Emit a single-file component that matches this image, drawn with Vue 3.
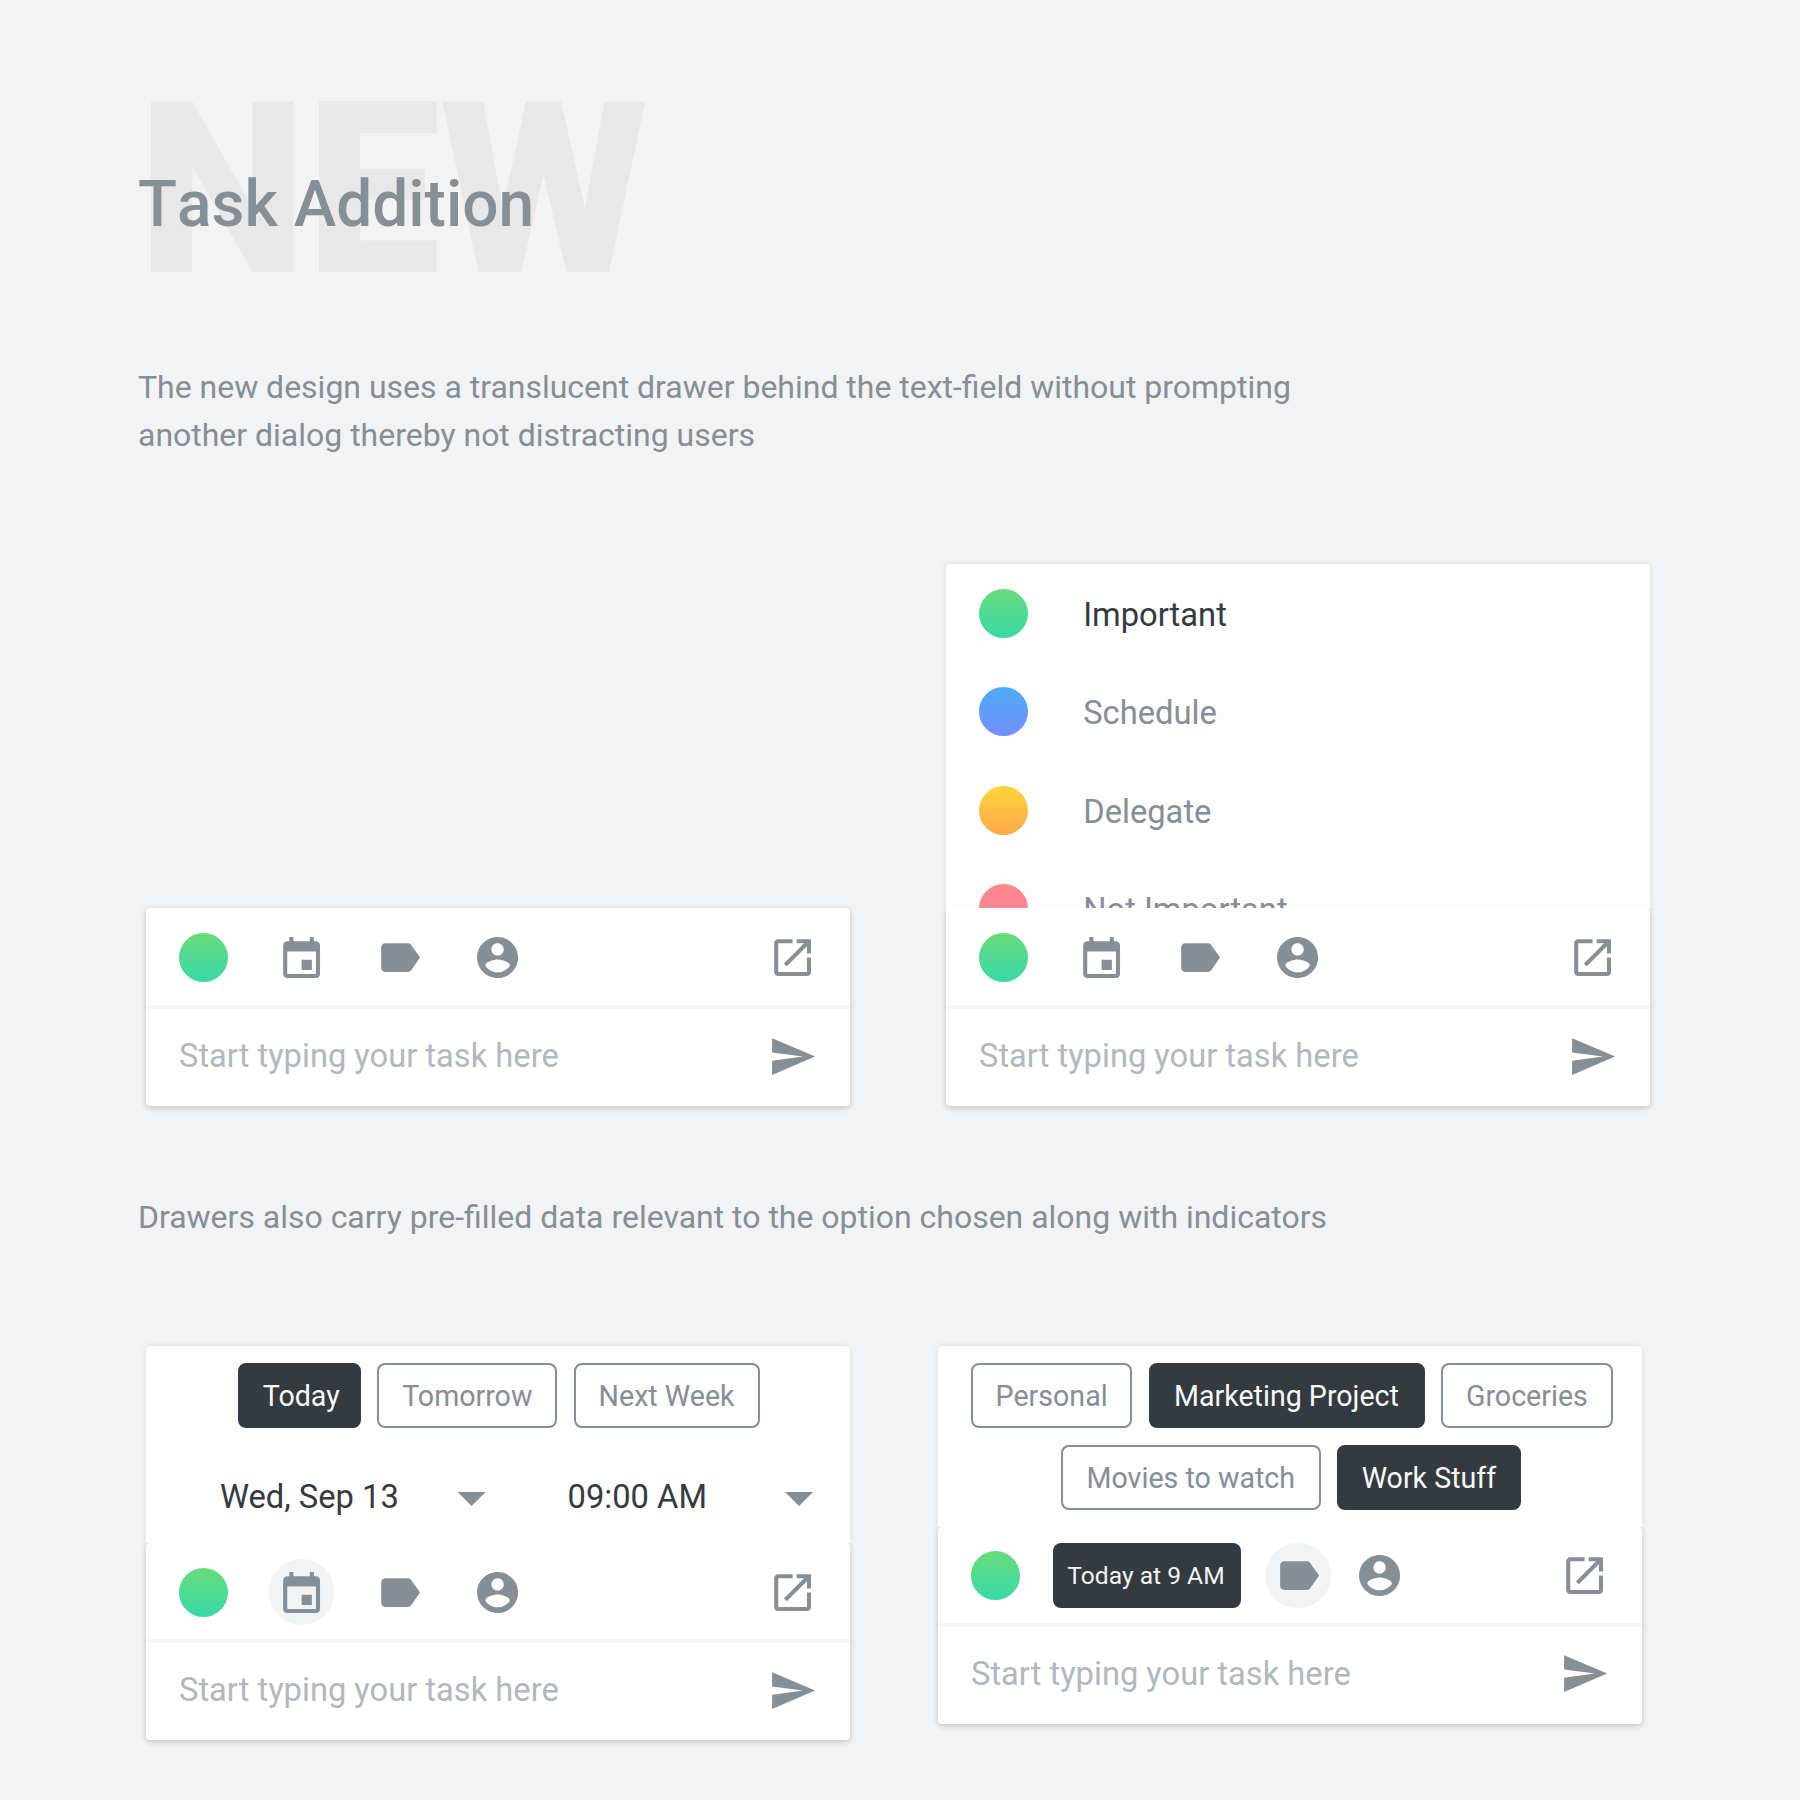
<script setup>
import { h } from 'vue'

const PATHS = {
  event:
    'M17 12h-5v5h5v-5zM16 1v2H8V1H6v2H5c-1.11 0-1.99.9-1.99 2L3 19c0 1.1.89 2 2 2h14c1.1 0 2-.9 2-2V5c0-1.1-.9-2-2-2h-1V1h-2zm3 18H5V8h14v11z',
  label:
    'M17.63 5.84C17.27 5.33 16.67 5 16 5L5 5.01C3.9 5.01 3 5.9 3 7v10c0 1.1.9 1.99 2 1.99L16 19c.67 0 1.27-.33 1.63-.84L22 12l-4.37-6.16z',
  account:
    'M12 2C6.48 2 2 6.48 2 12s4.48 10 10 10 10-4.48 10-10S17.52 2 12 2zm0 3c1.66 0 3 1.34 3 3s-1.34 3-3 3-3-1.34-3-3 1.34-3 3-3zm0 14.2c-2.5 0-4.71-1.28-6-3.22.03-1.99 4-3.08 6-3.08 1.99 0 5.97 1.09 6 3.08-1.29 1.94-3.5 3.22-6 3.22z',
  open:
    'M19 19H5V5h7V3H5c-1.11 0-2 .9-2 2v14c0 1.1.89 2 2 2h14c1.1 0 2-.9 2-2v-7h-2v7zM14 3v2h3.59l-9.83 9.83 1.41 1.41L19 6.41V10h2V3h-7z',
  send: 'M2.01 21L23 12 2.01 3 2 10l15 2-15 2z',
}

const Icon = (props) =>
  h(
    'svg',
    {
      viewBox: props.name === 'event' ? '0 -1 24 24' : '0 0 24 24',
      width: 49.2,
      height: 49.2,
      fill: 'currentColor',
      style: 'display:block',
    },
    [h('path', { d: PATHS[props.name] })],
  )
Icon.props = ['name']

const priorities = [
  { name: 'Important', tone: 'green', active: true },
  { name: 'Schedule', tone: 'blue' },
  { name: 'Delegate', tone: 'yellow' },
  { name: 'Not Important', tone: 'pink' },
]
const dates = [
  { name: 'Today', on: true, w: 122.6 },
  { name: 'Tomorrow', w: 179.8 },
  { name: 'Next Week', w: 186 },
]
const tags = [
  [
    { name: 'Personal', w: 161 },
    { name: 'Marketing Project', on: true, w: 276 },
    { name: 'Groceries', w: 172 },
  ],
  [
    { name: 'Movies to watch', w: 259.4 },
    { name: 'Work Stuff', on: true, w: 184 },
  ],
]
</script>

<template>
  <main class="page">
    <header class="head">
      <div class="ghost">NEW</div>
      <h1>Task Addition</h1>
    </header>

    <p class="intro">
      The new design uses a translucent drawer behind the text-field without prompting<br />another dialog thereby not
      distracting users
    </p>

    <section class="row first">
      <article class="card">
        <div class="bar">
          <div class="tools">
            <span class="dot green"></span>
            <span class="tool"><Icon name="event" /></span>
            <span class="tool"><Icon name="label" /></span>
            <span class="tool"><Icon name="account" /></span>
            <span class="end"><Icon name="open" /></span>
          </div>
          <div class="entry"><span>Start typing your task here</span><Icon name="send" /></div>
        </div>
      </article>

      <article class="card">
        <div class="drawer list">
          <div v-for="p in priorities" :key="p.name" class="item" :class="{ active: p.active }">
            <span class="dot" :class="p.tone"></span><span class="item-name">{{ p.name }}</span>
          </div>
        </div>
        <div class="bar">
          <div class="tools">
            <span class="dot green"></span>
            <span class="tool"><Icon name="event" /></span>
            <span class="tool"><Icon name="label" /></span>
            <span class="tool"><Icon name="account" /></span>
            <span class="end"><Icon name="open" /></span>
          </div>
          <div class="entry"><span>Start typing your task here</span><Icon name="send" /></div>
        </div>
      </article>
    </section>

    <p class="note">Drawers also carry pre-filled data relevant to the option chosen along with indicators</p>

    <section class="row second">
      <article class="card">
        <div class="drawer when">
          <div class="chips">
            <span v-for="d in dates" :key="d.name" class="chip" :class="{ on: d.on }" :style="{ width: d.w + 'px' }">{{
              d.name
            }}</span>
          </div>
          <div class="pickers">
            <span class="date">Wed, Sep 13</span><i class="caret"></i> <span class="time">09:00 AM</span
            ><i class="caret"></i>
          </div>
        </div>
        <div class="bar short">
          <div class="tools">
            <span class="dot green"></span>
            <span class="tool lit"><Icon name="event" /></span>
            <span class="tool"><Icon name="label" /></span>
            <span class="tool"><Icon name="account" /></span>
            <span class="end"><Icon name="open" /></span>
          </div>
          <div class="entry"><span>Start typing your task here</span><Icon name="send" /></div>
        </div>
      </article>

      <article class="card">
        <div class="drawer tags">
          <div v-for="(line, i) in tags" :key="i" class="chips">
            <span v-for="t in line" :key="t.name" class="chip" :class="{ on: t.on }" :style="{ width: t.w + 'px' }">{{
              t.name
            }}</span>
          </div>
        </div>
        <div class="bar short">
          <div class="tools packed">
            <span class="dot green"></span>
            <span class="stamp">Today at 9 AM</span>
            <span class="tool lit"><Icon name="label" /></span>
            <span class="tool"><Icon name="account" /></span>
            <span class="end"><Icon name="open" /></span>
          </div>
          <div class="entry"><span>Start typing your task here</span><Icon name="send" /></div>
        </div>
      </article>
    </section>
  </main>
</template>

<style>
body {
  background: #f1f3f5;
}
</style>

<style scoped>
.page {
  box-sizing: border-box;
  width: 1800px;
  height: 1800px;
  overflow: hidden;
  padding-left: 137px;
  background: #f1f3f5;
  color: #868e96;
  font-family: Roboto, 'Noto Sans', sans-serif;
}
.head {
  position: relative;
  height: 363px;
}
.ghost {
  position: absolute;
  left: 1px;
  top: 50px;
  font-size: 240px;
  line-height: 281px;
  font-weight: 900;
  letter-spacing: -0.5px;
  color: #e6e8ea;
  white-space: nowrap;
}
h1 {
  position: absolute;
  left: 1px;
  top: 167px;
  margin: 0;
  font-size: 64px;
  line-height: 76px;
  font-weight: 500;
  font-kerning: none;
  white-space: nowrap;
}
p {
  margin: 0 0 0 1px;
  font-size: 31.97px;
  line-height: 48px;
  white-space: nowrap;
}
.intro {
  height: 201px;
}
.row {
  display: flex;
  padding-left: 9px;
}
.first {
  height: 542px;
  gap: 96px;
  align-items: flex-end;
}
.second {
  gap: 88px;
  align-items: flex-start;
}
.note {
  margin-top: 87px;
  height: 153px;
}
.card {
  width: 704px;
  border-radius: 4px;
}
.drawer {
  box-sizing: border-box;
  background: #fdfdfd;
  border-radius: 4px 4px 0 0;
  box-shadow: 0 0 7px rgba(0, 0, 0, 0.1);
}
.bar {
  position: relative;
  background: #fff;
  border-radius: 4px;
  box-shadow:
    0 3px 6px rgba(0, 0, 0, 0.12),
    0 0 6px rgba(0, 0, 0, 0.1);
}
.drawer + .bar {
  clip-path: inset(0 -12px -14px -12px);
}
.tools {
  box-sizing: border-box;
  display: flex;
  align-items: center;
  height: 101px;
  padding: 2px 33px 0;
  border-bottom: 4px solid #f6f7f8;
}
.tools svg {
  margin-top: 1px;
}
.short .tools {
  height: 100px;
}
.tools.packed {
  padding-top: 1px;
}
.packed svg {
  margin-top: 0;
}
.packed + .entry {
  padding-bottom: 4px;
}
.dot {
  flex: none;
  width: 49px;
  height: 49px;
  border-radius: 50%;
}
.green {
  background: linear-gradient(#69db7c, #38d9a9);
}
.blue {
  background: linear-gradient(#4dabf7, #748ffc);
}
.yellow {
  background: linear-gradient(#ffd43b, #ffa94d);
}
.pink {
  background: linear-gradient(#ff8787, #f783ac);
}
.tool {
  display: flex;
  flex: none;
  align-items: center;
  justify-content: center;
  width: 65.6px;
  height: 65.6px;
  border-radius: 50%;
  margin-left: 32.6px;
}
.dot + .tool {
  margin-left: 40.8px;
}
.lit {
  background: #f1f3f5;
}
.stamp {
  display: flex;
  align-items: center;
  justify-content: center;
  box-sizing: border-box;
  width: 188px;
  height: 65.4px;
  margin-left: 33px;
  padding-right: 2px;
  border-radius: 8px;
  background: #343a40;
  color: #f1f3f5;
  font-size: 24.6px;
}
.packed .tool {
  margin-left: 24.4px;
}
.packed .tool + .tool {
  margin-left: 15.9px;
}
.end {
  margin-left: auto;
}
.entry {
  box-sizing: border-box;
  display: flex;
  align-items: center;
  justify-content: space-between;
  height: 97px;
  padding: 0 33.3px 3px 33px;
  color: #b1b8bf;
  font-size: 32.66px;
}
.entry svg {
  color: #868e96;
  margin-top: 0.6px;
}
.list {
  height: 345px;
  overflow: hidden;
}
.list + .bar {
  margin-top: -1px;
}
.item {
  display: flex;
  align-items: center;
  height: 98.5px;
  padding-left: 33px;
  font-size: 32.7px;
}
.item-name {
  margin-left: 55.2px;
  padding-top: 3px;
}
.item.active {
  color: #343a40;
}
.when {
  height: 197px;
  padding-top: 16.8px;
}
.tags {
  height: 181px;
  padding-top: 16.8px;
}
.chips {
  display: flex;
  justify-content: center;
  gap: 16.4px;
  margin-bottom: 16.4px;
}
.when .chips {
  padding-left: 2px;
}
.tags .chips {
  padding-left: 4px;
}
.tags .chips + .chips {
  padding-left: 2px;
}
.chip {
  box-sizing: border-box;
  display: flex;
  flex: none;
  align-items: center;
  justify-content: center;
  height: 65.6px;
  padding-top: 1px;
  border: 2px solid #868e96;
  border-radius: 8px;
  font-size: 28.6px;
  white-space: nowrap;
}
.chip.on {
  border-color: #343a40;
  background: #343a40;
  color: #f8f9fa;
}
.when .chip.on {
  padding-left: 3px;
}
.pickers {
  display: flex;
  align-items: center;
  height: 76px;
  margin-top: 31px;
  padding: 0 36px 0 74px;
  font-size: 32.7px;
  color: #343a40;
}
.date {
  width: 237.6px;
}
.time {
  margin-left: 82px;
  width: 217.4px;
}
.caret {
  flex: none;
  width: 28px;
  height: 14px;
  margin-top: 3px;
  background: #868e96;
  clip-path: polygon(0 0, 100% 0, 50% 100%);
}
</style>
